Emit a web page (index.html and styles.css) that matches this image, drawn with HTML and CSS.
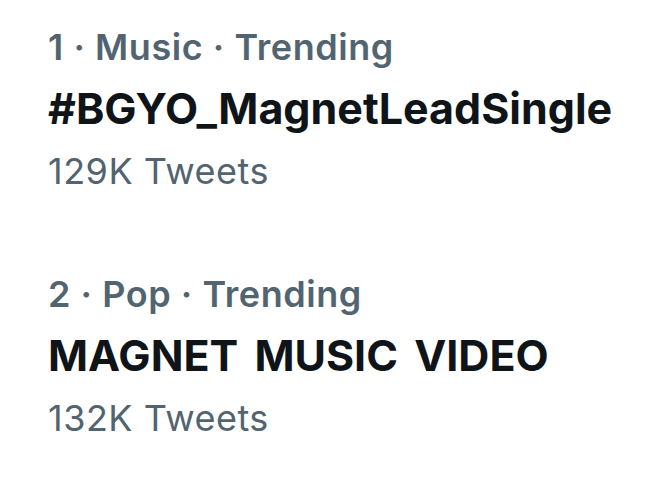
FILE: index.html
```html
<!DOCTYPE html>
<html lang="en">
<head>
<meta charset="utf-8">
<title>Trends</title>
<link rel="stylesheet" href="styles.css">
</head>
<body>
<div class="list">
  <div class="trend">
    <div class="meta">1 · Music · Trending</div>
    <div class="title">#BGYO_MagnetLeadSingle</div>
    <div class="count">129K Tweets</div>
  </div>
  <div class="trend">
    <div class="meta">2 · Pop · Trending</div>
    <div class="title">MAGNET MUSIC VIDEO</div>
    <div class="count">132K Tweets</div>
  </div>
</div>
</body>
</html>
```

FILE: styles.css
```css
html, body {
  margin: 0;
  padding: 0;
  background: #ffffff;
}
body {
  font-family: Inter, "Noto Sans", sans-serif;
  width: 669px;
  height: 504px;
  overflow: hidden;
}
.list {
  display: flex;
  flex-direction: column;
  gap: 64px;
  padding: 20px 0 0 48px;
}
.trend {
  display: flex;
  flex-direction: column;
}
.meta {
  font-size: 36px;
  line-height: 54px;
  font-weight: 600;
  letter-spacing: 0.55px;
  color: #536471;
}
.title {
  padding-top: 3px;
  font-size: 43px;
  line-height: 62px;
  font-weight: 700;
  word-spacing: 6px;
  color: #0f1419;
}
.count {
  font-size: 36px;
  line-height: 64px;
  font-weight: 400;
  letter-spacing: 0.5px;
  color: #536471;
}
```
